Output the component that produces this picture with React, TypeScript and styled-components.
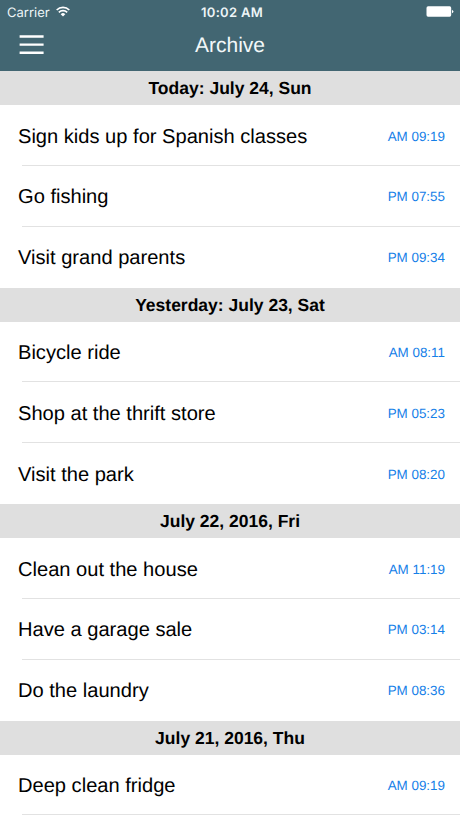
import React from "react";
import styled, { createGlobalStyle } from "styled-components";

const Global = createGlobalStyle`
  * { box-sizing: border-box; }
  body { margin: 0; background: #fff; font-family: "Liberation Sans", Arial, sans-serif; overflow: hidden; text-rendering: geometricPrecision; }
`;
const Screen = styled.main`
  width: 460px; height: 818px; overflow: hidden; background: #fff; display: flex; flex-direction: column;
`;
const Header = styled.header`
  flex: none; height: 71px; background: #426672; color: #fff;
`;
const StatusBar = styled.div`
  height: 24px; display: grid; grid-template-columns: 1fr auto 1fr; align-items: center; padding: 0 6px 0 7px;
  font-family: Inter, "Liberation Sans", sans-serif;
`;
const Carrier = styled.div`
  display: flex; align-items: center; gap: 6px; padding-top: 1px; font-size: 13px; letter-spacing: 0; color: #edf5f7;
  svg { display: block; margin-bottom: 3px; }
`;
const Clock = styled.div`font-size: 13px; font-weight: 600; letter-spacing: 0.3px; padding: 1px 0 0 3px; color: #edf5f7;`;
const Battery = styled.svg`justify-self: end; display: block; margin-bottom: 1px;`;
const NavBar = styled.div`
  height: 42px; display: grid; grid-template-columns: 60px 1fr 60px; align-items: center;
`;
const MenuButton = styled.button`
  border: 0; padding: 0 0 0 19px; background: none; height: 42px; display: flex; align-items: center;
`;
const Title = styled.h1`margin: 0; padding-top: 2px; font-size: 21px; line-height: 24px; font-weight: 400; text-align: center; color: #f2f8f9;`;
const DayHeader = styled.h2`
  flex: none; margin: 0; height: 34px; background: #dfdfdf; color: #000;
  font-size: 17.5px; line-height: 35px; font-weight: 700; text-align: center;
`;
const List = styled.ul`flex: none; margin: 0; padding: 0; list-style: none;`;
const Row = styled.li`
  height: 60.85px; padding: 0 15px 0 18px; display: flex; align-items: center; justify-content: space-between;
  background: linear-gradient(#e2e2e2, #e2e2e2) 22px 100% / 100% 1px no-repeat;
  ${List}:not(:last-child) > &:last-child { background: none; }
`;
const Task = styled.span`font-size: 20.1px; line-height: 24px; color: #000; padding-top: 2.2px;`;
const Time = styled.span`font-size: 13.4px; line-height: 16px; color: #1580e8; padding-top: 2.2px;`;

const days = [
  { title: "Today: July 24, Sun", items: [["Sign kids up for Spanish classes", "AM 09:19"], ["Go fishing", "PM 07:55"], ["Visit grand parents", "PM 09:34"]] },
  { title: "Yesterday: July 23, Sat", items: [["Bicycle ride", "AM 08:11"], ["Shop at the thrift store", "PM 05:23"], ["Visit the park", "PM 08:20"]] },
  { title: "July 22, 2016, Fri", items: [["Clean out the house", "AM 11:19"], ["Have a garage sale", "PM 03:14"], ["Do the laundry", "PM 08:36"]] },
  { title: "July 21, 2016, Thu", items: [["Deep clean fridge", "AM 09:19"]] },
];

export default function App() {
  return (
    <Screen>
      <Global />
      <Header>
        <StatusBar>
          <Carrier>Carrier
            <svg width="14" height="11" viewBox="0 0 14 11" fill="none" stroke="#fff" strokeWidth="1.7">
              <path d="M.7 4a9 9 0 0 1 12.6 0M2.8 6.3a6 6 0 0 1 8.4 0" /><path d="M4.7 8.2a3.3 3.3 0 0 1 4.6 0L7 10.6z" fill="#fff" stroke="none" />
            </svg>
          </Carrier>
          <Clock>10:02 AM</Clock>
          <Battery width="28" height="11" viewBox="0 0 28 11" fill="#fff"><rect x=".5" y=".3" width="24.7" height="10.4" rx="1.6" /><path d="M26 3.7q2.8 1.8 0 3.6z" /></Battery>
        </StatusBar>
        <NavBar>
          <MenuButton aria-label="Menu"><svg width="25" height="20" viewBox="0 0 25 20" stroke="#fff" strokeWidth="2.4"><path d="M.6 1.5h24M.6 9.6h24M.6 17.7h24" /></svg></MenuButton>
          <Title>Archive</Title>
        </NavBar>
      </Header>
      {days.map((d) => (
        <React.Fragment key={d.title}>
          <DayHeader>{d.title}</DayHeader>
          <List>{d.items.map(([t, h]) => <Row key={t}><Task>{t}</Task><Time>{h}</Time></Row>)}</List>
        </React.Fragment>
      ))}
    </Screen>
  );
}
